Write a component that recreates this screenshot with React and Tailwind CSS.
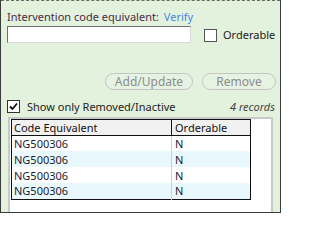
import React from 'react';

const rows = ['NG500306', 'NG500306', 'NG500306', 'NG500306'];

function CheckBox({ checked }) {
  return (
    <span className="flex h-[13px] w-[13px] shrink-0 items-center justify-center border border-[#333] bg-white">
      {checked && (
        <svg width="9" height="9" viewBox="0 0 9 9">
          <path d="M1 4.5 L3.5 7 L8 1.5" fill="none" stroke="#111" strokeWidth="1.8" />
        </svg>
      )}
    </span>
  );
}

export default function App() {
  return (
    <div
      className="relative flex h-[213px] w-[281px] flex-col overflow-hidden border-x border-b border-[#3a3a3a] bg-[#e2f2dc] text-[11px]"
      style={{ fontFamily: '"Noto Sans", "Open Sans", sans-serif' }}
    >
      <div className="h-px w-full border-t border-dashed border-[#6a6a6a]" />
      <div className="mt-[8px] flex items-baseline gap-[5px] pl-[6px] leading-[16px]">
        <span className="text-[#4a2a48]">Intervention code equivalent:</span>
        <span className="text-[#4a86e8]">Verify</span>
      </div>
      <div className="mt-[1px] flex items-center pl-[6px]">
        <div className="h-[17px] w-[184px] border border-t-[#707070] border-l-[#707070] border-b-[#d8d8d8] border-r-[#d8d8d8] bg-white" />
        <div className="ml-[13px] flex items-center gap-[6px] pt-[1px]">
          <span className="h-[13px] w-[13px] border border-[#555] bg-white" />
          <span className="text-[#222]">Orderable</span>
        </div>
      </div>
      <div className="mt-[29px] flex justify-end gap-[9px] pr-[4px]">
        <button className="h-[17px] w-[88px] rounded-full border border-[#c4c4c4] bg-[#e6f3e2] text-[12px] leading-[15px] text-[#8c8c8c]">
          Add/Update
        </button>
        <button className="h-[17px] w-[74px] rounded-full border border-[#c4c4c4] bg-[#e6f3e2] text-[12px] leading-[15px] text-[#8c8c8c]">
          Remove
        </button>
      </div>
      <div className="mt-[10px] flex items-center pl-[6px] pr-[5px] leading-[14px]">
        <CheckBox checked />
        <span className="ml-[7px] text-[#222]">Show only Removed/Inactive</span>
        <span className="ml-auto italic text-[#444]">4 records</span>
      </div>
      <div className="mx-[7px] mt-[3px] flex-1 border-x-2 border-t-2 border-[#c9c9c9] bg-white pl-px">
        <table className="w-[240px] border-collapse border border-[#111] leading-[15px] text-[#1c1c2c]">
          <thead>
            <tr className="bg-[#f1f1f1]">
              <th className="w-[160px] border border-[#111] px-[2px] text-left font-normal text-[#111]">Code Equivalent</th>
              <th className="border border-[#111] px-[3px] text-left font-normal text-[#111]">Orderable</th>
            </tr>
          </thead>
          <tbody>
            {rows.map((r, i) => (
              <tr key={i} className={i % 2 ? 'bg-[#e8f8fc]' : 'bg-white'}>
                <td className="h-[16px] border-r border-[#c8d0d4] px-[2px]">{r}</td>
                <td className="px-[3px]">N</td>
              </tr>
            ))}
          </tbody>
        </table>
      </div>
    </div>
  );
}
